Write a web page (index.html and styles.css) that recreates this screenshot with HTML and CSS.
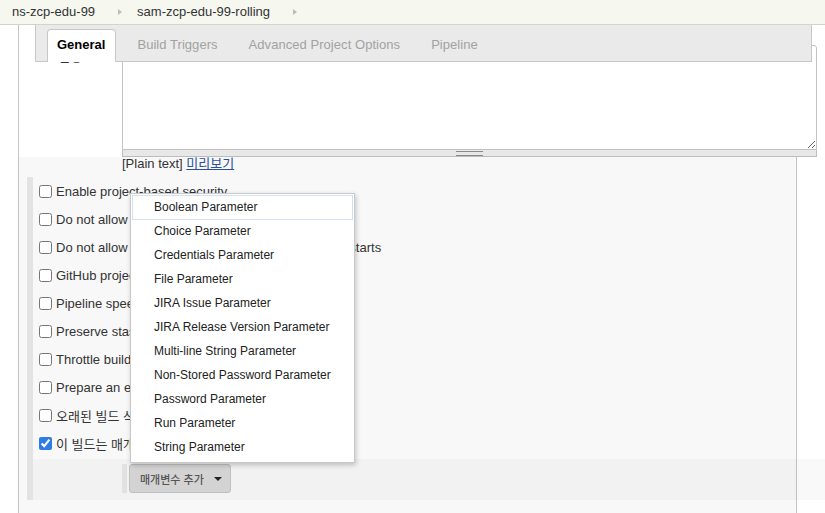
FILE: index.html
```html
<!DOCTYPE html>
<html lang="ko">
<head>
<meta charset="utf-8">
<title>sam-zcp-edu-99-rolling Config</title>
<link rel="stylesheet" href="styles.css">
</head>
<body>
<div class="crumbs">
  <span class="crumb">ns-zcp-edu-99</span><span class="arrow"></span>
  <span class="crumb">sam-zcp-edu-99-rolling</span><span class="arrow"></span>
</div>
<div class="page">
  <div class="main">
    <div class="tabbar">
      <div class="tab active">General</div>
      <div class="tab">Build Triggers</div>
      <div class="tab">Advanced Project Options</div>
      <div class="tab">Pipeline</div>
    </div>
    <div class="desc-row">
      <div class="label">설명</div>
      <div class="desc-field">
        <textarea class="desc-input"></textarea>
        <div class="grip"><span class="grip-lines"></span></div>
      </div>
    </div>
    <div class="preview">[Plain text] <a class="preview-link" href="#">미리보기</a></div>
    <div class="section">
      <label class="opt"><input type="checkbox" class="cb"><span>Enable project-based security</span></label>
      <label class="opt"><input type="checkbox" class="cb"><span>Do not allow concurrent builds</span></label>
      <label class="opt"><input type="checkbox" class="cb"><span>Do not allow the pipeline to resume if the master restarts</span></label>
      <label class="opt"><input type="checkbox" class="cb"><span>GitHub project</span></label>
      <label class="opt"><input type="checkbox" class="cb"><span>Pipeline speed/durability override</span></label>
      <label class="opt"><input type="checkbox" class="cb"><span>Preserve stashes from completed builds</span></label>
      <label class="opt"><input type="checkbox" class="cb"><span>Throttle builds</span></label>
      <label class="opt"><input type="checkbox" class="cb"><span>Prepare an environment for the run</span></label>
      <label class="opt"><input type="checkbox" class="cb"><span>오래된 빌드 삭제</span></label>
      <label class="opt"><input type="checkbox" class="cb" checked><span>이 빌드는 매개변수가 있습니다</span></label>
      <div class="band">
        <div class="btnwrap">
          <button class="add-btn" type="button">매개변수 추가<span class="caret"></span></button>
        </div>
      </div>
    </div>
    <ul class="menu">
      <li class="item focused">Boolean Parameter</li>
      <li class="item">Choice Parameter</li>
      <li class="item">Credentials Parameter</li>
      <li class="item">File Parameter</li>
      <li class="item">JIRA Issue Parameter</li>
      <li class="item">JIRA Release Version Parameter</li>
      <li class="item">Multi-line String Parameter</li>
      <li class="item">Non-Stored Password Parameter</li>
      <li class="item">Password Parameter</li>
      <li class="item">Run Parameter</li>
      <li class="item">String Parameter</li>
    </ul>
  </div>
</div>
</body>
</html>
```
FILE: styles.css
```css
html, body {
  margin: 0;
  padding: 0;
  overflow: hidden;
  background: #fff;
}
body {
  font-family: "Liberation Sans", "Noto Sans CJK KR", sans-serif;
  font-size: 13px;
  color: #333;
  height: 513px;
}
.crumbs {
  height: 24px;
  background: #f6f8f0;
  border-bottom: 1px solid #d2d2d2;
  display: flex;
  align-items: center;
  padding-left: 12px;
  color: #333;
}
.crumb {
  line-height: 16px;
}
.arrow {
  width: 0;
  height: 0;
  border-top: 3px solid transparent;
  border-bottom: 3px solid transparent;
  border-left: 4px solid #bcbcbc;
  margin-left: 23px;
  margin-right: 15px;
}
.page {
  display: flex;
}
.main {
  position: relative;
  margin-left: 18px;
  width: 777px;
  flex: none;
  min-height: 488px;
  border-left: 1px solid #c4c4c4;
  border-right: 1px solid #c4c4c4;
  background: #f8f8f8;
}
.tabbar {
  position: absolute;
  left: 16px;
  top: 0;
  width: 777px;
  height: 37px;
  box-sizing: border-box;
  display: flex;
  align-items: flex-end;
  padding-left: 11px;
  background: #eaeaea;
  border: 1px solid #c8c8c8;
  border-top: 0;
  z-index: 3;
}
.tab {
  height: 32px;
  line-height: 30px;
  padding: 0 10px;
  margin-right: 11px;
  margin-bottom: -1px;
  color: #a2a2a2;
  box-sizing: border-box;
  letter-spacing: 0.05px;
}
.tab.active {
  height: 33px;
  line-height: 30px;
  background: #fff;
  color: #000;
  font-weight: bold;
  border: 1px solid #c8c8c8;
  border-bottom: 0;
  border-radius: 4px 4px 0 0;
  padding: 0 10px 0 9px;
  letter-spacing: 0;
}
.desc-row {
  display: grid;
  grid-template-columns: 103px 695px;
  padding-top: 20px;
  background: #fff;
}
.label {
  padding-left: 39px;
  padding-top: 4px;
  line-height: 16px;
}
.desc-field {
  display: flex;
  flex-direction: column;
}
.desc-input {
  display: block;
  width: 695px;
  height: 105px;
  box-sizing: border-box;
  margin: 0;
  padding: 2px;
  border: 1px solid #c2c2c2;
  border-radius: 3px 3px 0 0;
  resize: vertical;
  background: #fff;
  font-family: "Liberation Mono", monospace;
}
.grip {
  height: 7px;
  box-sizing: border-box;
  background: #e8e8e8;
  border: 1px solid #bdbdbd;
  border-top: 0;
  display: flex;
  justify-content: center;
}
.grip-lines {
  width: 27px;
  height: 3px;
  margin-top: 1px;
  border-top: 1px solid #8a8a8a;
  border-bottom: 1px solid #8a8a8a;
}
.preview {
  height: 14px;
  line-height: 14px;
  padding-left: 103px;
  margin-top: 0;
  color: #333;
}
.preview-link {
  color: #2b4fa0;
  text-decoration: underline;
}
.section {
  margin-top: 6px;
  margin-left: 8px;
  border-left: 6px solid #e3e3e3;
  padding-bottom: 0;
}
.opt {
  display: flex;
  align-items: center;
  height: 28px;
  padding-left: 6px;
  white-space: nowrap;
}
.cb {
  width: 13px;
  height: 13px;
  margin: 0 4px 0 0;
  accent-color: #2f7ce6;
}
.band {
  margin-top: 2px;
  width: 800px;
  box-sizing: border-box;
  padding: 5px 0 7px 89px;
  background: rgba(0, 0, 0, 0.022);
  display: flex;
}
.btnwrap {
  border-left: 5px solid #e2e2e2;
  padding-left: 2px;
  display: flex;
}
.add-btn {
  height: 29px;
  width: 102px;
  box-sizing: border-box;
  padding: 0 0 0 10px;
  display: flex;
  align-items: center;
  background: #d3d3d3;
  border: 1px solid #c0c0c0;
  border-radius: 3px;
  font-family: "Liberation Sans", "Noto Sans CJK KR", sans-serif;
  font-size: 11px;
  font-weight: 500;
  color: #555;
}
.caret {
  width: 0;
  height: 0;
  margin-left: 10px;
  border-left: 4px solid transparent;
  border-right: 4px solid transparent;
  border-top: 4px solid #222;
}
.menu {
  position: absolute;
  left: 111px;
  top: 168px;
  width: 225px;
  box-sizing: border-box;
  margin: 0;
  padding: 1px 1px 3px;
  list-style: none;
  background: #fff;
  border: 1px solid #c9c9c9;
  box-shadow: 1px 2px 5px rgba(0, 0, 0, 0.22);
  z-index: 5;
}
.item {
  height: 24px;
  line-height: 24px;
  padding-left: 22px;
  font-size: 12px;
  color: #222;
  white-space: nowrap;
}
.item.focused {
  box-sizing: border-box;
  height: 25px;
  line-height: 23px;
  padding-left: 21px;
  border: 1px solid #d2e1f6;
  margin-bottom: -1px;
}
```
